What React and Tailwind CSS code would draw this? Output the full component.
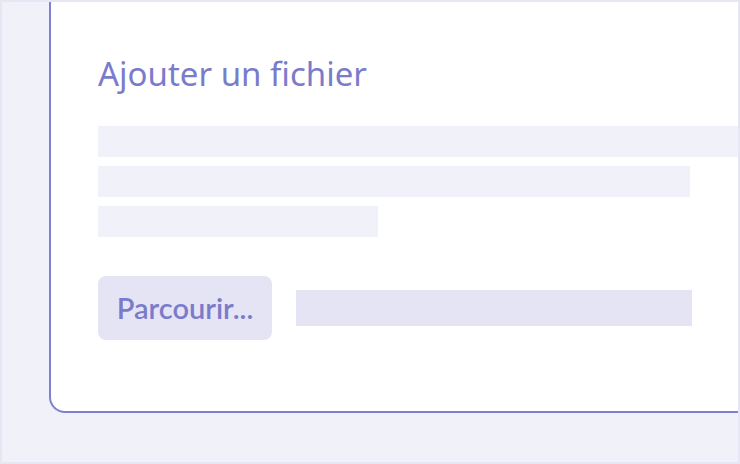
import React from "react";

const App = () => {
  return (
    <div
      className="w-[740px] h-[464px] overflow-hidden border-2 border-[#e6e6f4] bg-[#f1f1fa]"
      style={{ fontFamily: "Lato, 'Noto Sans', sans-serif" }}
    >
      <div className="w-[760px] h-[411px] ml-[47px] bg-white border-l-2 border-b-2 border-[#8080d0] rounded-bl-2xl pl-[47px] pt-[52px]">
        <h1 className="font-['Noto_Sans',sans-serif] text-[33px] leading-[40px] text-[#7b7bcc]">
          Ajouter un fichier
        </h1>

        <div className="mt-[32px] flex flex-col gap-[9px]">
          <div className="h-[31px] w-[700px] bg-[#f1f1fa]" />
          <div className="h-[31px] w-[592px] bg-[#f1f1fa]" />
          <div className="h-[31px] w-[280px] bg-[#f1f1fa]" />
        </div>

        <div className="mt-[39px] flex items-center gap-[24px]">
          <button className="h-[64px] w-[174px] rounded-lg bg-[#e5e4f5] text-[29px] font-semibold text-[#7b7bcc]">
            Parcourir...
          </button>
          <div className="h-[36px] w-[396px] bg-[#e5e4f5]" />
        </div>
      </div>
    </div>
  );
};

export default App;
